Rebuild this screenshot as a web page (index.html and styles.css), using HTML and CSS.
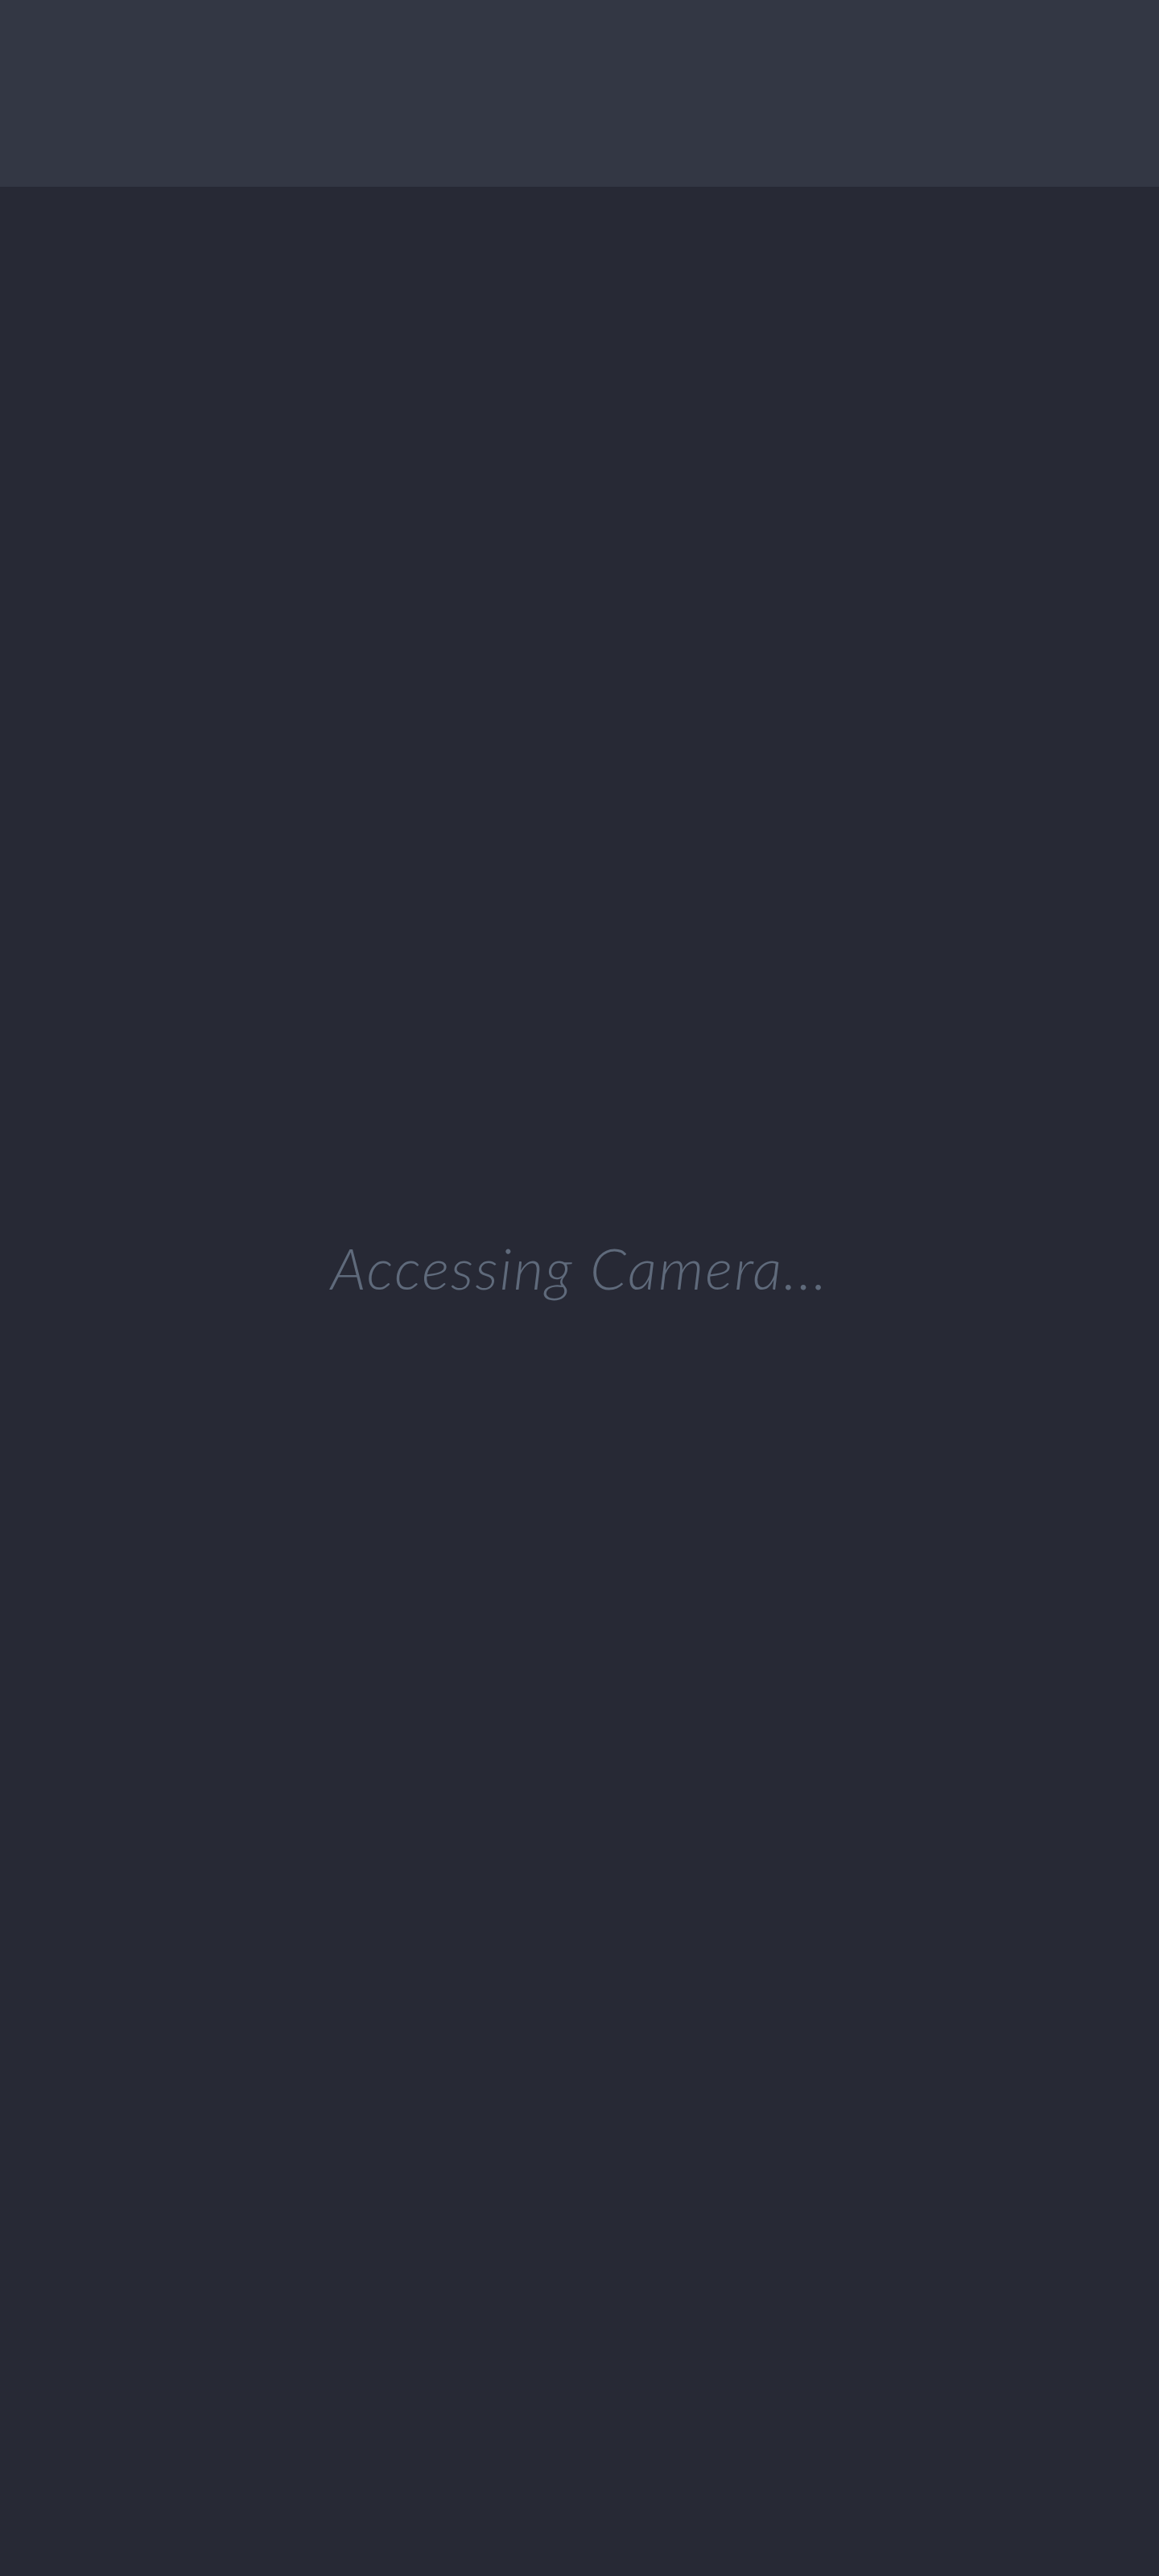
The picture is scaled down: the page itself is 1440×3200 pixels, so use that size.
FILE: index.html
```html
<!DOCTYPE html>
<html lang="en">
<head>
<meta charset="utf-8">
<title>Accessing Camera</title>
<link rel="stylesheet" href="styles.css">
</head>
<body>
<header class="topbar"></header>
<main class="stage">
  <p class="status">Accessing Camera...</p>
</main>
</body>
</html>
```
FILE: styles.css
```css
html, body {
  margin: 0;
  padding: 0;
  background: #272935;
}
body {
  width: 1440px;
  min-height: 3200px;
  font-family: Lato, "Open Sans", sans-serif;
}
.topbar {
  height: 232px;
  background: #333744;
}
.stage {
  display: flex;
  flex-direction: column;
  align-items: center;
  padding-top: 1306px;
}
.status {
  margin: 0;
  font-size: 72px;
  line-height: 1;
  font-weight: 300;
  font-style: italic;
  color: #5f6a7b;
  letter-spacing: 2.1px;
}
```
